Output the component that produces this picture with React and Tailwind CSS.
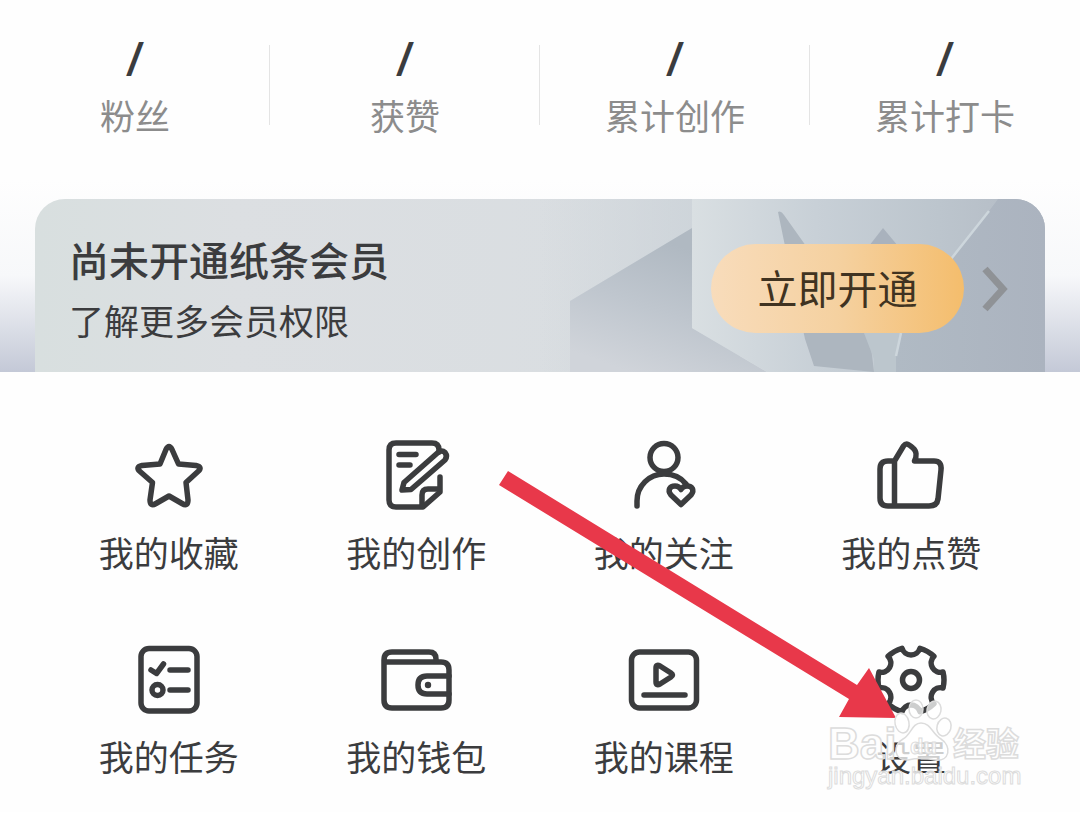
const stats = ["粉丝", "获赞", "累计创作", "累计打卡"];

const StarIcon = () => (
  <path d="M27 24 33 9.5Q36 3.5 39 9.5L45.5 24 63 25.5Q70 27 65 31.5L53 42.5 55 60Q55 67 49 63.5L36 56 23 63.5Q17 67 17 60L19.5 42.5 7 31.5Q2 27 9 25.5Z" />
);

const DraftIcon = () => (
  <>
    <path d="M59 12V10q0-7-7-7H16q-7 0-7 7v50q0 7 7 7h27L60 52V37" />
    <path d="M42 66V55q0-6 6-6h11" />
    <path d="M19 14.5h17M19 25h11" />
    <path d="M22 50 24 42.5 58 12.5q4-3 7 0 3 4 0 7.500L31 49.5Z" />
  </>
);

const FollowIcon = () => (
  <>
    <circle cx="36" cy="17.5" r="14" />
    <path d="M9 66v-5C9 46 21 34 36 34c9 0 17 3.5 22 10" />
    <path d="M53 64.5 43 55C39 50 42 46 47 46q4 0 6 3.5 2-3.5 6-3.5C64 46 67 50 63 55Z" />
  </>
);

const LikeIcon = () => (
  <path d="M19.5 21H13q-8 0-8 8v29q0 8 8 8h41q8 0 9-7l3-29q1-9-7-9H39.5C42 16 41.5 11 38 8 33 3.5 31 3 28.5 6L19.5 21V66" />
);

const TaskIcon = () => (
  <>
    <rect x="8" y="4.5" width="56" height="62.5" rx="8" />
    <path d="M18 26l5.5 3.5 7-9.5M37 26h18M37 46h18" />
    <circle cx="24.5" cy="46" r="5.5" />
  </>
);

const WalletIcon = () => (
  <>
    <path d="M56 18v-3q0-7-7-7H12q-8 0-8 8v40q0 8 8 8h49q8 0 8-8V26q0-8-8-8H4" />
    <path d="M69 32H47q-9 0-9 9t9 9h22" />
    <circle cx="48" cy="41" r="3.2" fill="currentColor" stroke="none" />
  </>
);

const CourseIcon = () => (
  <>
    <rect x="3.5" y="8" width="65" height="56" rx="8" />
    <path d="M28 24v14q0 4 4 2l11-7q3-2 0-4L32 22q-4-2-4 2ZM16 51h41" />
  </>
);

const SettingsIcon = () => (
  <>
    <circle cx="36" cy="36" r="8.5" />
    <path d="M27 4.3A9.4 9.4 0 0 0 45 4.3 33 33 0 0 1 58.9 12.3 9.4 9.4 0 0 0 68 28 33 33 0 0 1 68 44 9.4 9.4 0 0 0 58.9 59.7 33 33 0 0 1 45 67.7 9.4 9.4 0 0 0 27 67.7 33 33 0 0 1 13.1 59.7 9.4 9.4 0 0 0 4 44 33 33 0 0 1 4 28 9.4 9.4 0 0 0 13.1 12.3 33 33 0 0 1 27 4.3Z" />
  </>
);

const menu = [
  { label: "我的收藏", icon: StarIcon },
  { label: "我的创作", icon: DraftIcon },
  { label: "我的关注", icon: FollowIcon },
  { label: "我的点赞", icon: LikeIcon },
  { label: "我的任务", icon: TaskIcon },
  { label: "我的钱包", icon: WalletIcon },
  { label: "我的课程", icon: CourseIcon },
  { label: "设置", icon: SettingsIcon },
];

function BannerArt() {
  return (
    <svg viewBox="0 0 505 173" className="absolute right-0 top-0 h-full" aria-hidden="true">
      <defs>
        <linearGradient id="base" x1="0" y1="0" x2="1" y2="0">
          <stop offset="0" stopColor="#cbd2d8" stopOpacity="0" />
          <stop offset="1" stopColor="#cbd2d8" />
        </linearGradient>
        <linearGradient id="fold" x1="0.7" y1="0.2" x2="0.3" y2="1">
          <stop offset="0" stopColor="#b0b9c2" />
          <stop offset="0.5" stopColor="#bfc6ce" />
          <stop offset="1" stopColor="#d0d4da" />
        </linearGradient>
        <linearGradient id="panel" x1="0" x2="1">
          <stop offset="0" stopColor="#d9dfe2" />
          <stop offset="0.35" stopColor="#c8d0d7" />
          <stop offset="0.7" stopColor="#bcc5cd" />
          <stop offset="1" stopColor="#b3bac4" />
        </linearGradient>
        <linearGradient id="side" x1="0" x2="1">
          <stop offset="0" stopColor="#b0bac4" />
          <stop offset="1" stopColor="#abb3bf" />
        </linearGradient>
      </defs>
      <path d="M0 0H200V173H0Z" fill="url(#base)" />
      <path d="M30 102 152 29V129L227 173H30Z" fill="url(#fold)" />
      <path d="M152 0H505V173H227L152 129Z" fill="url(#panel)" />
      <path d="M238 13Q241 11 244 16L266 47 330 140 334 173 274 167 265 140 245 47Z" fill="#adb6bf" />
      <path d="M324 134 334 160V173H356V160L361 134Z" fill="#bcc6cd" />
      <path d="M343 29 329 47H358Z" fill="#a9b2bd" />
      <path d="M458 0 449 12 411 60 361 134 356 157V173H505V0Z" fill="url(#side)" />
      <path d="M449 12 411 60M361 134 356 157" stroke="#cdd6dc" strokeWidth="2.5" fill="none" />
    </svg>
  );
}

function Arrow() {
  return (
    <svg viewBox="0 0 398 247" className="pointer-events-none absolute left-[499px] top-[99px] w-[398px]" aria-hidden="true">
      <path d="M9 0 358 214 370 197 397 247 340 246 350 228 0 14Z" fill="#e8384a" />
    </svg>
  );
}

function Watermark() {
  return (
    <svg viewBox="0 0 200 100" className="pointer-events-none absolute left-[826px] top-[324px] w-[200px]" aria-hidden="true">
      <g fill="#fff" fillOpacity="0.75" stroke="#dcdcdc" strokeWidth="1.5" fontFamily="'Liberation Sans', 'Noto Sans CJK SC', sans-serif">
        <text x="2" y="63" fontSize="44" fontWeight="700">Bai</text>
        <ellipse cx="76" cy="27" rx="7" ry="10" transform="rotate(-12 76 27)" />
        <ellipse cx="90" cy="13" rx="7" ry="9" />
        <ellipse cx="108" cy="14" rx="7" ry="9" transform="rotate(12 108 14)" />
        <ellipse cx="118" cy="31" rx="7" ry="9" transform="rotate(15 118 31)" />
        <path d="M95 27C86 27 85 39 77 43 66 49 68 65 82 64 91 62 99 62 109 64 124 66 126 50 115 43 106 38 105 27 95 27Z" />
        <text x="84" y="58" fontSize="22" fontWeight="700" strokeWidth="1">du</text>
        <text x="127" y="60" fontSize="33" fontWeight="700">经验</text>
        <text x="2" y="88" fontSize="24" strokeWidth="1">jingyan.baidu.com</text>
      </g>
    </svg>
  );
}

export default function App() {
  return (
    <main className="overflow-hidden bg-[#fefefe] font-['Noto_Sans_CJK_SC',sans-serif] text-[#3b3c3e]">
      <section className="flex pt-[34px]">
        {stats.map((label) => (
          <div key={label} className="relative flex flex-1 flex-col items-center">
            <span className="font-['Noto_Sans',sans-serif] text-[48px] leading-[48px] font-medium">/</span>
            <span className="mt-[9px] text-[35px] leading-[48px] text-[#8c8c8c]">{label}</span>
            {label !== "累计打卡" && <i className="absolute right-0 top-[11px] h-20 w-px bg-[#e4e4e4]" />}
          </div>
        ))}
      </section>

      <section className="mt-[41px] bg-linear-to-b from-[#fefefe] via-[#f7f8fa] via-50% to-[#c4c9d7] px-[35px] pt-[19px]">
        <div className="relative flex items-start justify-between overflow-hidden rounded-t-[30px] bg-linear-to-r from-[#d8dfdf] via-[#dcdfe2] via-20% to-[#d6dce0] pb-7 pl-[34px] pr-[37px] pt-9">
          <BannerArt />
          <div className="relative">
            <h2 className="text-[40px] leading-[48px] font-medium">尚未开通纸条会员</h2>
            <p className="mt-[13px] text-[35px] leading-[48px]">了解更多会员权限</p>
          </div>
          <div className="relative mt-[9px] flex items-center gap-[18px]">
            <button type="button" className="h-[89px] w-[253px] rounded-full bg-linear-to-r from-[#f8dcbb] via-[#f5d1a0] to-[#f4bd6c] pb-1 text-[40px] text-[#403321]">
              立即开通
            </button>
            <svg viewBox="0 0 26 46" className="w-[26px]" fill="none" stroke="#8f9296" strokeWidth="7" aria-hidden="true">
              <path d="M3 3 21 23 3 43" />
            </svg>
          </div>
        </div>
      </section>

      <section className="relative bg-[#fefefe] px-[45px] pb-8 pt-[68px]">
        <nav className="grid grid-cols-4 gap-y-[68px]">
          {menu.map(({ label, icon: Icon }) => (
            <a key={label} href="#" className="flex flex-col items-center">
              <svg viewBox="0 0 72 72" className="size-[72px]" fill="none" stroke="currentColor" strokeWidth="5.5" strokeLinecap="round" strokeLinejoin="round" aria-hidden="true">
                <Icon />
              </svg>
              <span className="mt-4 text-[35px] leading-[48px]">{label}</span>
            </a>
          ))}
        </nav>
        <Arrow />
        <Watermark />
      </section>
    </main>
  );
}
